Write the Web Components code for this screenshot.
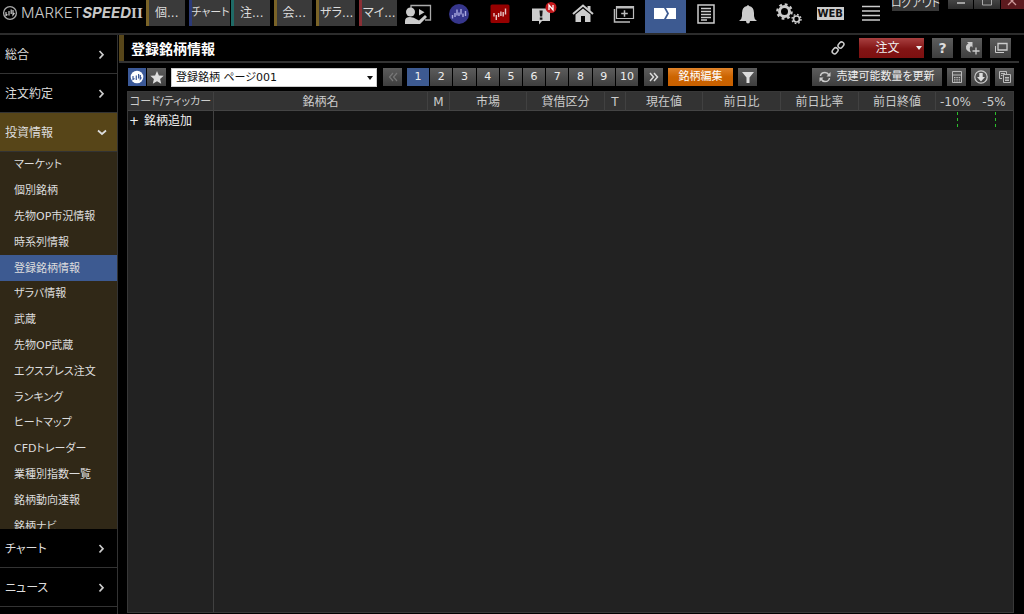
<!DOCTYPE html>
<html lang="ja">
<head>
<meta charset="utf-8">
<title>登録銘柄情報</title>
<style>
  html, body { height: 100%; }
  body {
    margin: 0; background: #000; color: #ddd; overflow: hidden;
    font: 12px/18px "DejaVu Sans", "Noto Sans CJK JP", sans-serif;
    font-feature-settings: "palt";
  }
</style>
</head>
<body>
<ms-app>
  <ms-topbar slot="top">
    <ms-tab color="#7a6327">個...</ms-tab>
    <ms-tab color="#2c3a78" compact>チャート</ms-tab>
    <ms-tab color="#1f6a66">注...</ms-tab>
    <ms-tab color="#7a6327">会...</ms-tab>
    <ms-tab color="#7a6327">ザラ...</ms-tab>
    <ms-tab color="#8a2f35">マイ...</ms-tab>
  </ms-topbar>
  <ms-sidebar slot="side">
    <ms-category slot="before">総合</ms-category>
    <ms-category slot="before">注文約定</ms-category>
    <ms-category slot="before" open>投資情報</ms-category>
    <ms-link>マーケット</ms-link>
    <ms-link>個別銘柄</ms-link>
    <ms-link>先物OP市況情報</ms-link>
    <ms-link>時系列情報</ms-link>
    <ms-link current>登録銘柄情報</ms-link>
    <ms-link>ザラバ情報</ms-link>
    <ms-link>武蔵</ms-link>
    <ms-link>先物OP武蔵</ms-link>
    <ms-link>エクスプレス注文</ms-link>
    <ms-link>ランキング</ms-link>
    <ms-link>ヒートマップ</ms-link>
    <ms-link>CFDトレーダー</ms-link>
    <ms-link>業種別指数一覧</ms-link>
    <ms-link>銘柄動向速報</ms-link>
    <ms-link>銘柄ナビ</ms-link>
    <ms-category slot="after">チャート</ms-category>
    <ms-category slot="after">ニュース</ms-category>
  </ms-sidebar>
  <ms-titlebar>登録銘柄情報</ms-titlebar>
  <ms-toolbar></ms-toolbar>
  <ms-watchlist></ms-watchlist>
</ms-app>

<script>
const ICONS = {
  emblem: [16, 16, '<circle cx="8" cy="8" r="6.4" fill="none" stroke="#aaa" stroke-width="1.3"/><path d="M4 7v3.500l1.500-1M7 10.500V6M9.200 4.500V9M11 5v5l1.500-2" fill="none" stroke="#ccc" stroke-width="1.200"/>'],
  seminar: [28, 22, '<path d="M7 5V2.500h19.500V17H21" fill="none" stroke="#aaa" stroke-width="1.300"/><circle cx="6.500" cy="9" r="4.500" fill="#ccc"/><path d="M1 21v-3q0-4 5-4 4 0 7 2.500l2 1 6-5.500 2 2-7 7z" fill="#ccc"/><path d="M15 6l5.500 3.200-5.500 3.200z" fill="#ccc"/>'],
  wave: [20, 20, '<circle cx="10" cy="10" r="10" fill="#36368c"/><path d="M3.500 11v3.500M6 9v4M8 5.500v6M10 8.500V12M12 5v5.500M14 9.500V13M16.500 7v5" stroke="#aaa9e0" stroke-width="1.400"/>'],
  red: [20, 20, '<rect x=".5" y=".5" width="19" height="18.500" rx="1.500" fill="#960000"/><path d="M4 9v3.500M6.300 11v5M8.600 9v4M10.900 7.500v4.500M13.200 8v4.500M15.500 4.500v6" stroke="#e6c6c6" stroke-width="1.400"/>'],
  message: [32, 24, '<path d="M7 6.500h18v12.500h-8l-3 3.500V19H7z" fill="#ccc"/><path d="M14.500 8.500h3.200l-.5 6h-2.200zM14.800 15.500h2.600v2.200h-2.600z" fill="#111"/><circle cx="26" cy="5.500" r="5.500" fill="#c4181c"/><path d="M24 8V3l4 5V3" fill="none" stroke="#fff" stroke-width="1.300"/>'],
  home: [22, 19, '<path d="M1 10L11 1.500 21 10" fill="none" stroke="#ccc" stroke-width="2"/><path d="M15.500 2h3v5l-3-2.500z" fill="#ccc"/><path d="M3.500 10.500L11 4.500l7.500 6V18H13v-6H9v6H3.500z" fill="#ccc"/>'],
  addwin: [22, 18, '<path d="M3.500 1.500h17v12h-17z" fill="none" stroke="#bbb" stroke-width="1.200"/><path d="M3 1h18v2.500H3z" fill="#bbb"/><path d="M1.500 4v13H17M11.500 5.200v6.600M8.200 8.500h6.600" fill="none" stroke="#bbb" stroke-width="1.500"/>'],
  ticket: [24, 12, '<path d="M1 0h10l3 5.500-3 5.500H1z M13 0h10v11H13l3-5.500z" fill="#fff"/>'],
  news: [18, 20, '<path d="M1 1h16v18H1z" fill="none" stroke="#ccc" stroke-width="1.500"/><path d="M4 4.500h10M4 7.500h10M4 10.500h10M4 13.500h10M4 16h6" stroke="#ccc" stroke-width="1.500"/>'],
  bell: [18, 20, '<path d="M8 2q1-2 2 0 5 1 5 7v3q0 3 3 5H0q3-2 3-5V9q0-6 5-7z" fill="#ccc"/><circle cx="9" cy="17.500" r="1.900" fill="#ccc"/>'],
  gears: [26, 22, '<g fill="none" stroke="#ccc"><circle cx="8.500" cy="8.500" r="5" stroke-width="3"/><circle cx="8.500" cy="8.500" r="7.200" stroke-width="2.200" stroke-dasharray="2.800 2.855"/><circle cx="20.500" cy="16" r="3" stroke-width="1.700"/><circle cx="20.500" cy="16" r="4.500" stroke-width="1.400" stroke-dasharray="1.700 1.834"/></g>'],
  menu: [18, 17, '<path d="M0 1.500h18M0 6h18M0 10.500h18M0 15h18" stroke="#ccc" stroke-width="1.400"/>'],
  chain: [14, 14, '<g fill="none" stroke="#ccc" stroke-width="1.500"><rect x="-3" y="-2.300" width="6.500" height="4.600" rx="2.300" transform="translate(4 10) rotate(-50)"/><rect x="-3.300" y="-2.300" width="6.500" height="4.600" rx="2.300" transform="translate(10 4) rotate(-50)"/></g>'],
  jump: [16, 14, '<path d="M3 1h5.500v5.500L7 5Q4.500 7 7 11.500 1.500 10 2 5.500 2.300 3.500 4.500 2.500z" fill="#ccc"/><path d="M12 6.500v7M8.500 10h7" stroke="#ccc" stroke-width="1.300"/>'],
  windows: [14, 12, '<path d="M4 1.500h9v6.500H4z" fill="none" stroke="#ccc" stroke-width="1.300"/><path d="M1.500 4v6.500H10" fill="none" stroke="#ccc"/>'],
  emblem2: [14, 14, '<circle cx="7" cy="7" r="6.300" fill="#fff"/><path d="M3 6v3.500l1.500-1M6.300 10V5.500M8.600 4v4.500M10.300 5v4l1.200-1.500" fill="none" stroke="#3b5998" stroke-width="1.200"/>'],
  star: [14, 13, '<path d="M7 0l1.900 4.400 4.800.4-3.600 3.200 1.100 4.700L7 10.200l-4.200 2.500 1.100-4.700L.3 4.800l4.800-.4z" fill="#ddd"/>'],
  prev: [10, 10, '<path d="M5 1L1.500 5 5 9M9 1L5.500 5 9 9" fill="none" stroke="#777" stroke-width="1.200"/>'],
  next: [10, 10, '<path d="M1 1l3.500 4L1 9M5 1l3.500 4L5 9" fill="none" stroke="#ddd" stroke-width="1.500"/>'],
  funnel: [12, 11, '<path d="M0 0h12L7.500 5.500V11h-3V5.500z" fill="#ddd"/>'],
  refresh: [12, 12, '<path d="M1.500 5Q2 1.500 6 1.500q2.500 0 4 2.500M10.500 7q-.5 3.500-4.500 3.500-2.500 0-4-2.500" fill="none" stroke="#ccc" stroke-width="1.500"/><path d="M11.500 1v4.500h-4zM.5 11V6.500h4z" fill="#ccc"/>'],
  calc: [12, 14, '<path d="M1.500 1.500h9v11h-9zM1.500 5h9" fill="none" stroke="#bbb"/><path d="M3 7h1.500v1H3zM5.300 7h1.500v1H5.300zM7.600 7h1.500v1H7.600zM3 8.700h1.500v1H3zM5.300 8.700h1.500v1H5.300zM7.600 8.700h1.500v1H7.600zM3 10.400h1.500v1H3zM5.300 10.400h1.500v1H5.300zM7.600 10.400h1.500v1H7.600z" fill="#bbb"/>'],
  down: [14, 14, '<circle cx="7" cy="7" r="6.200" fill="none" stroke="#ccc" stroke-width="1.200"/><path d="M5.300 3h3.400v4H11l-4 4.500L3 7h2.300z" fill="#ddd"/>'],
  copy: [14, 14, '<path d="M4 8.500H1.500v-7h7V4M3 3.500h4M3 5.500h1.500" fill="none" stroke="#bbb"/><path d="M5.500 4.500h7v8h-7zM7 7.500h4M7 9h4M7 10.500h4" fill="none" stroke="#bbb"/>'],
  right: [8, 10, '<path d="M2.500 1L6 4.700 2.500 8.500" fill="none" stroke="#ccc" stroke-width="1.700"/>'],
  open: [10, 8, '<path d="M1 1.500L5 5l4-3.500" fill="none" stroke="#ddd" stroke-width="1.700"/>'],
  caret: [6, 4, '<path d="M0 0h6L3 4z" fill="currentColor"/>'],
  min: [10, 8, '<path d="M1 3h8" stroke="#bbb" stroke-width="1.600"/>'],
  max: [10, 8, '<path d="M.5-1v6h9V-1" fill="none" stroke="#aaa"/>'],
  close: [10, 8, '<path d="M1-3l8 8M9-3L1 5" stroke="#c99" stroke-width="1.300"/>']
};

class MsElement extends HTMLElement {
  constructor() {
    super();
    this.attachShadow({ mode: 'open' });
  }
  connectedCallback() {
    this.shadowRoot.innerHTML = '<style>:host,*{box-sizing:border-box}button{font:inherit;font-feature-settings:inherit;color:inherit;border:0;padding:0;margin:0;background:none}' +
      this.constructor.css + '</style>' + this.view();
  }
}
const define = (name, css, view) => {
  const C = class extends MsElement { view() { return view(this); } };
  C.css = css;
  customElements.define(name, C);
};

define('ms-icon', ':host{display:inline-flex;flex:none}svg{display:block}', el => {
  const [w, h, body] = ICONS[el.getAttribute('name')];
  return `<svg width="${w}" height="${h}" viewBox="0 0 ${w} ${h}" aria-hidden="true">${body}</svg>`;
});

define('ms-app', `
  :host{display:grid;height:100vh;grid-template:35px minmax(0,1fr)/118px minmax(0,1fr)}
  .top{grid-column:1/3;display:grid;border-bottom:2px solid #2c2c2c}
  .side{display:grid;min-height:0}
  main{display:flex;flex-direction:column;min-width:0;padding:0 10px 1px 1px}`,
  () => `<header class="top"><slot name="top"></slot></header>
    <div class="side"><slot name="side"></slot></div><main><slot></slot></main>`);

const TOP_ICONS = [['seminar', 'セミナー'], ['wave', 'チャート'], ['red', '取引'], ['message', 'お知らせ'], ['home', 'ホーム'],
  ['addwin', '追加'], ['ticket', '登録銘柄'], ['news', 'ニュース'], ['bell', '通知'], ['gears', '設定'], ['', 'WEB'], ['menu', 'メニュー']];
define('ms-topbar', `
  :host{display:grid;grid-template-columns:146px 251px minmax(0,1fr) 132px;height:33px}
  .logo{display:flex;align-items:center;height:26px;padding-left:2px;gap:3px;color:#c8c8c8;font:300 15px/18px Inter,sans-serif;white-space:nowrap}
  .logo b{font-weight:700;font-style:italic}
  .logo i{font:bold 15px/18px "Liberation Serif",serif}
  .tabs{display:grid;grid-template-columns:repeat(6,minmax(0,1fr));column-gap:4px;height:26px}
  .icons{display:grid;grid-template-columns:repeat(12,minmax(0,1fr))}
  .icons button{display:flex;align-items:center;justify-content:center;padding-bottom:6px}
  .icons .on{background:#3d5a91}
  .web{background:#ccc;color:#111;font:bold 10px/13px "DejaVu Sans",sans-serif;width:27px}
  .win{display:flex;align-items:flex-start;gap:1px}
  .win button{display:flex;justify-content:center;width:26px;height:9px;background:linear-gradient(#444,#2c2c2c)}
  .win .out{width:47px;height:11px;margin-right:8px;background:#383838;align-items:flex-end;font-size:11px;line-height:14px;white-space:nowrap}
  .win .x{width:24px;background:#5c1a1e}`,
  () => `<div class="logo"><ms-icon name="emblem"></ms-icon><span>MARKET<b>SPEED</b><i>II</i></span></div>
    <div class="tabs"><slot></slot></div>
    <div class="icons">${TOP_ICONS.map(([n, l]) => `<button aria-label="${l}"${n === 'ticket' ? ' class="on"' : ''}>${n ? `<ms-icon name="${n}"></ms-icon>` : '<span class="web">WEB</span>'}</button>`).join('')}</div>
    <div class="win"><button class="out">ログアウト</button><button aria-label="最小化"><ms-icon name="min"></ms-icon></button><button aria-label="最大化"><ms-icon name="max"></ms-icon></button><button class="x" aria-label="閉じる"><ms-icon name="close"></ms-icon></button></div>`);

define('ms-tab', `
  :host{display:grid;min-width:0}
  button{background:#3a3a3a;border-left:3px solid var(--c);color:#ddd;font-size:12px;line-height:26px;white-space:nowrap}
  :host([compact]) button{font-size:11px}`,
  el => `<button style="--c:${el.getAttribute('color')}"><slot></slot></button>`);

define('ms-sidebar', `
  :host{display:grid;min-height:0}
  nav{display:flex;flex-direction:column;min-height:0;border-right:1px solid #333;padding-bottom:7px}
  .list{flex:1;min-height:0;overflow:hidden;background:#302817}
  .rows{display:grid;grid-auto-rows:minmax(0,1fr);height:387px}`,
  () => `<nav aria-label="メニュー"><slot name="before"></slot><div class="list"><div class="rows"><slot></slot></div></div><slot name="after"></slot></nav>`);

define('ms-category', `
  :host{display:block;flex:none}
  button{display:flex;width:100%;height:39px;align-items:center;justify-content:space-between;padding:2px 12px 0 5px;border-bottom:1px solid #333;color:#ddd}
  :host([open]) button{background:#574518;padding-right:10px}`,
  el => `<button aria-expanded="${el.hasAttribute('open')}"><span><slot></slot></span><ms-icon name="${el.hasAttribute('open') ? 'open' : 'right'}"></ms-icon></button>`);

define('ms-link', `
  :host{display:grid;min-height:0}
  a{display:flex;align-items:center;padding:1px 0 0 14px;color:#ddd;text-decoration:none;font-size:11px;white-space:nowrap}
  :host([current]) a{background:#3d5a91}`,
  el => `<a href="#"${el.hasAttribute('current') ? ' aria-current="page"' : ''}><slot></slot></a>`);

const STEEL = 'background:linear-gradient(#5c5c5c,#3e3e3e);';
define('ms-titlebar', `
  :host{display:flex;align-items:center;height:28px;border-bottom:2px solid #333;flex:none;margin-right:-5px;padding-right:8px}
  h1{flex:1;margin:0;border-left:5px solid #57461a;padding:2px 0 0 7px;font-size:14px;line-height:24px;color:#fff}
  .b{display:flex;align-items:center;justify-content:center;height:20px;width:21px;margin-left:8px;${STEEL}}
  .q{font-weight:bold;font-size:14px}
  .order{width:65px;margin-left:14px;padding-left:14px;gap:16px;color:#eee;background:linear-gradient(#a84040,#821414 55%,#7c1010)}`,
  () => `<h1><slot></slot></h1><ms-icon name="chain"></ms-icon>
    <button class="b order">注文<ms-icon name="caret"></ms-icon></button><button class="b q">?</button>
    <button class="b" aria-label="移動"><ms-icon name="jump"></ms-icon></button><button class="b" aria-label="別ウィンドウ"><ms-icon name="windows"></ms-icon></button>`);

define('ms-toolbar', `
  :host{display:flex;align-items:center;height:28px;flex:none;padding-left:9px;font-size:11px}
  .b{display:flex;align-items:center;justify-content:center;flex:none;height:18px;width:19px;margin-right:5px;color:#eee;${STEEL}}
  .blue{background:#3b5998;width:18px;margin-right:1px}
  label{position:relative;display:flex;width:206px;margin-right:6px}
  select{appearance:none;width:100%;height:19px;border:1px solid #ccc;border-radius:0;background:#fff;color:#111;font:inherit;font-feature-settings:inherit;padding:0 16px 0 4px}
  label ms-icon{position:absolute;right:4px;top:8px;color:#111}
  .pages{display:grid;grid-template-columns:repeat(10,minmax(0,1fr));column-gap:1px;width:231px;margin-right:6px}
  .pages .b{width:auto;margin:0}
  .pages .on{background:#3d5a91}
  .edit{width:65px;background:linear-gradient(#e0832a,#cc6400 50%,#c86000);color:#fff}
  .re{width:130px;gap:5px;margin-left:auto}
  .b:last-child{margin-right:0}`,
  () => `<button class="b blue" aria-label="マーケット"><ms-icon name="emblem2"></ms-icon></button><button class="b" aria-label="お気に入り"><ms-icon name="star"></ms-icon></button>
    <label><select aria-label="ページ"><option>登録銘柄 ページ001</option></select><ms-icon name="caret"></ms-icon></label>
    <button class="b" aria-label="前へ"><ms-icon name="prev"></ms-icon></button>
    <div class="pages">${Array.from({ length: 10 }, (_, i) => `<button class="b${i ? '' : ' on'}">${i + 1}</button>`).join('')}</div>
    <button class="b" aria-label="次へ"><ms-icon name="next"></ms-icon></button>
    <button class="b edit">銘柄編集</button><button class="b" aria-label="絞り込み"><ms-icon name="funnel"></ms-icon></button>
    <button class="b re"><ms-icon name="refresh"></ms-icon>売建可能数量を更新</button>
    <button class="b" aria-label="電卓"><ms-icon name="calc"></ms-icon></button><button class="b" aria-label="ダウンロード"><ms-icon name="down"></ms-icon></button><button class="b" aria-label="コピー"><ms-icon name="copy"></ms-icon></button>`);

const COLS = [['コード/ティッカー', 86], ['銘柄名', 0], ['M', 22], ['市場', 77], ['貸借区分', 78], ['T', 21], ['現在値', 77], ['前日比', 78], ['前日比率', 78], ['前日終値', 77]];
define('ms-watchlist', `
  :host{display:grid;flex:1;min-height:0;margin-left:8px;border:1px solid #383838;background:#222}
  table{width:100%;height:100%;border-collapse:separate;border-spacing:0;table-layout:fixed}
  th,td{padding:0;font-weight:normal;white-space:nowrap}
  th{height:19px;line-height:16px;padding-top:2px;background:#333;color:#ccc;border-right:1px solid #414141;border-bottom:1px solid #444}
  th:first-child{font-size:11px}
  th:last-child{border-right:0}
  .add td{height:19px;background:#151515}
  tr td:first-child{border-right:1px solid #414141}
  td button{display:flex;gap:5px;padding:1px 0 0 1px;line-height:17px;color:#eee}
  .scale{display:grid;grid-template-columns:39px 38px;justify-items:center}
  .scale i{height:18px;width:1px;margin-left:4px;background:repeating-linear-gradient(#2bc02b 0 3px,transparent 3px 6px)}
  .scale i + i{margin-left:3px}`,
  () => `<table><colgroup>${COLS.map(c => c[1] ? `<col style="width:${c[1]}px">` : '<col>').join('')}<col style="width:77px"></colgroup>
    <thead><tr>${COLS.map(c => `<th scope="col">${c[0]}</th>`).join('')}<th scope="col"><div class="scale"><span>-10%</span><span>-5%</span></div></th></tr></thead>
    <tbody><tr class="add"><td><button><span>+</span><span>銘柄追加</span></button></td><td colspan="9"></td><td><div class="scale"><i></i><i></i></div></td></tr>
    <tr><td></td><td colspan="10"></td></tr></tbody></table>`);
</script>
</body>
</html>
